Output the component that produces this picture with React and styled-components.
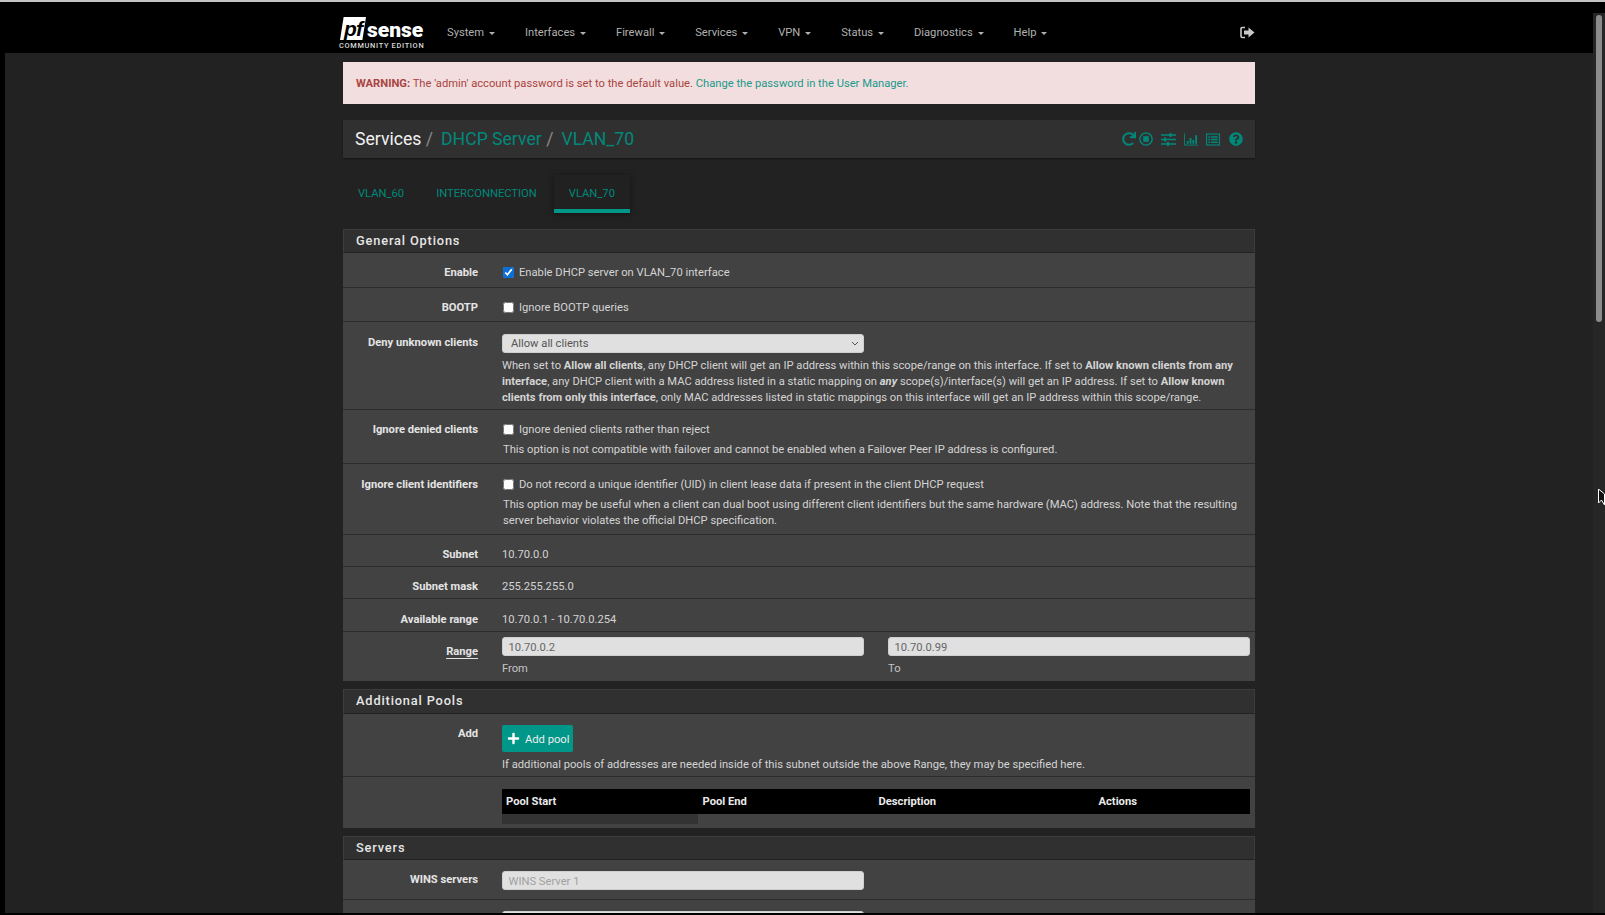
import React from 'react';
import styled, { createGlobalStyle } from 'styled-components';
import { FaRedo, FaQuestionCircle, FaPlus } from 'react-icons/fa';

const GlobalStyle = createGlobalStyle`
    html, body {
        margin: 0;
        height: 100%;
        overflow: hidden;
        background: #000;
    }
    * { box-sizing: border-box; }
`;

const Frame = styled.div`
    position: relative;
    height: 915px;
    display: flex;
    flex-direction: column;
    font-family: 'Roboto', 'Liberation Sans', sans-serif;
    font-size: 11.2px;
    line-height: 16px;
    color: #d4d4d4;
    border-top: 2px solid #c4c4c4;
    border-bottom: 2px solid #000;
    background: #000;
`;

const Shell = styled.div`
    flex: 1;
    min-height: 0;
    display: flex;
`;

const Page = styled.div`
    flex: 1;
    min-width: 0;
    display: flex;
    flex-direction: column;
    overflow: hidden;
`;

const Navbar = styled.nav`
    height: 51px;
    flex: none;
    background: #000;
    display: flex;
    align-items: center;
    padding: 9px 338px 0 339px;
`;

const Logo = styled.div`
    width: 93px;
    height: 34px;
    margin-top: 2px;
    flex: none;
    display: flex;
    flex-direction: column;
`;

const LogoTop = styled.div`
    display: flex;
    align-items: flex-end;
    height: 24px;
`;

const LogoBadge = styled.span`
    width: 26px;
    height: 23px;
    margin-left: 1px;
    background: #fff;
    color: #000;
    font-family: 'Liberation Sans', sans-serif;
    font-weight: 700;
    font-style: italic;
    font-size: 21px;
    line-height: 24px;
    letter-spacing: -1px;
    text-align: center;
    clip-path: polygon(14% 0, 100% 0, 86% 100%, 0 100%);
`;

const LogoWord = styled.span`
    font-family: 'Roboto', sans-serif;
    font-weight: 900;
    font-size: 21px;
    line-height: 20px;
    color: #fff;
    margin-left: 1px;
`;

const LogoEdition = styled.div`
    font-family: 'Roboto', sans-serif;
    font-weight: 500;
    font-size: 7.4px;
    line-height: 9px;
    letter-spacing: 0.68px;
    color: #d8d8d8;
    white-space: nowrap;
    margin-top: 1px;
`;

const NavItem = styled.span`
    display: flex;
    align-items: center;
    padding: 1px 15px 0;
    color: #b0b0b0;
    white-space: nowrap;
`;

const Caret = styled.i`
    display: inline-block;
    width: 0;
    height: 0;
    margin-left: 4.8px;
    margin-top: 1px;
    border-top: 3px solid currentColor;
    border-left: 3px solid transparent;
    border-right: 3px solid transparent;
`;

const NavRight = styled.div`
    margin-left: auto;
    display: flex;
    color: #c8c8c8;
`;

const Content = styled.main`
    flex: 1;
    min-height: 0;
    background: #222;
    margin-left: 5px;
    padding-left: 338px;
    overflow: hidden;
`;

const Column = styled.div`
    width: 912px;
`;

const Alert = styled.div`
    margin-top: 9px;
    height: 42px;
    padding: 14px 13px 0;
    background: #f2dede;
    color: #a94442;
`;

const AlertLink = styled.a`
    color: #1a9a8c;
    text-decoration: none;
`;

const Crumbs = styled.div`
    margin-top: 16px;
    height: 38px;
    padding: 0 12px;
    display: flex;
    align-items: center;
    background: #303030;
    box-shadow: 0 1px 2px rgba(0, 0, 0, 0.4);
`;

const CrumbTitle = styled.h1`
    margin: 0;
    display: flex;
    font-size: 17.6px;
    font-weight: 400;
    line-height: 24px;
    color: #f2f2f2;
`;

const CrumbLink = styled.a`
    color: #00897b;
    text-decoration: none;
`;

const CrumbSep = styled.span`
    color: #8a8a8a;
    margin: 0 8px 0 4.5px;
`;

const CrumbIcons = styled.div`
    margin-left: auto;
    display: flex;
    align-items: center;
    color: #00897b;
`;

const IconSlot = styled.span`
    display: flex;
    margin-left: ${(p) => p.$gap ?? 8}px;
`;

const Tabs = styled.div`
    margin-top: 17px;
    height: 38px;
    display: flex;
    gap: 2px;
`;

const Tab = styled.a`
    padding: 11px 15px 0;
    color: #00897b;
    background: ${(p) => (p.$active ? '#212121' : 'transparent')};
    border-bottom: 4px solid ${(p) => (p.$active ? '#009688' : 'transparent')};
    box-shadow: ${(p) => (p.$active ? '0 1px 6px rgba(0, 0, 0, 0.45)' : 'none')};
`;

const Panel = styled.section`
    margin-top: ${(p) => p.$top ?? 8}px;
    background: #424242;
`;

const PanelHeading = styled.h2`
    margin: 0;
    height: ${(p) => p.$height}px;
    padding: 0 12px ${(p) => p.$lift ?? 0}px;
    display: flex;
    align-items: center;
    background: #303030;
    border: 1px solid #3d3d3d;
    border-bottom-color: #222;
    font-size: 12.8px;
    font-weight: 500;
    letter-spacing: 0.84px;
    color: #e6e6e6;
`;

const Row = styled.div`
    height: ${(p) => p.$height}px;
    padding-top: ${(p) => p.$top ?? 11}px;
    display: flex;
    border-bottom: ${(p) => (p.$last ? 'none' : '1px solid #2c2c2c')};
`;

const Label = styled.div`
    width: 135px;
    flex: none;
    margin-top: ${(p) => p.$offset ?? 1}px;
    text-align: right;
    font-weight: 700;
    color: #e4e4e4;
`;

const LabelText = styled.span`
    border-bottom: ${(p) => (p.$under ? '1px solid #e4e4e4' : 'none')};
`;

const Value = styled.div`
    margin-left: 24px;
    flex: 1;
    min-width: 0;
    padding-right: 5px;
`;

const PlainValue = styled.div`
    padding-top: 1px;
`;

const CheckLine = styled.label`
    display: flex;
    align-items: center;
    padding-top: 1px;
`;

const Check = styled.input.attrs({ type: 'checkbox' })`
    width: 11px;
    height: 11px;
    margin: -1px 5.5px 0 0.5px;
    accent-color: #0b6fd6;
`;

const Help = styled.div`
    margin-top: ${(p) => p.$top ?? 4}px;
    padding-left: ${(p) => p.$indent ?? 0}px;
    padding-right: 8px;
`;

const Select = styled.select`
    display: block;
    width: 362px;
    height: 19px;
    padding: 0 0 0 8px;
    appearance: none;
    background-color: #e0e0e0;
    background-image: url("data:image/svg+xml,%3Csvg xmlns='http://www.w3.org/2000/svg' width='8' height='5'%3E%3Cpath d='M1 1l3 3 3-3' fill='none' stroke='%23555' stroke-width='1'/%3E%3C/svg%3E");
    background-repeat: no-repeat;
    background-position: right 4px center;
    border: 1px solid #cfcfcf;
    border-radius: 3px;
    font: inherit;
    color: #555;
`;

const Field = styled.input`
    display: block;
    width: 362px;
    height: 19px;
    padding: 1px 5.5px 0;
    background: #e0e0e0;
    border: 1px solid #cfcfcf;
    border-radius: 3px;
    font: inherit;
    color: #666;
    &::placeholder { color: #a0a0a0; opacity: 1; }
`;

const RangeGrid = styled.div`
    display: grid;
    grid-template-columns: 362px 362px;
    column-gap: 24px;
`;

const SubLabel = styled.div`
    margin-top: 5px;
    color: #c4c4c4;
`;

const AddButton = styled.button`
    display: flex;
    align-items: center;
    gap: 5px;
    width: 71px;
    height: 27px;
    padding: 0 0 0 5px;
    border: none;
    border-radius: 2px;
    background: #009688;
    color: #eee;
    font: inherit;
`;

const AddText = styled.span`
    padding-top: 2px;
`;

const TableHead = styled.div`
    display: grid;
    grid-template-columns: 196.5px 176px 220px 1fr;
    height: 25px;
    width: 748px;
    align-items: center;
    padding-left: 4px;
    background: #000;
    font-weight: 700;
    color: #eaeaea;
`;

const TableStub = styled.div`
    width: 196px;
    height: 10px;
    background: #333;
`;

const Track = styled.div`
    width: 12px;
    flex: none;
    margin-top: 11px;
    padding: 2px 3px 0;
    background: #262626;
`;

const Thumb = styled.div`
    height: 307px;
    border-radius: 3px;
    background: #8c8c8c;
`;

const Cursor = styled.svg`
    position: absolute;
    left: 1598px;
    top: 487px;
`;

const NAV = ['System', 'Interfaces', 'Firewall', 'Services', 'VPN', 'Status', 'Diagnostics', 'Help'];

function LogoutIcon() {
    return (
        <svg width="15" height="13" viewBox="0 0 15 13">
            <path d="M5 1.5H2.2A1.2 1.2 0 0 0 1 2.7v7.6a1.2 1.2 0 0 0 1.2 1.2H5" fill="none" stroke="currentColor" strokeWidth="1.6" />
            <path d="M4 4.5h4.5V1.5L14.5 6.5 8.5 11.5V8.5H4z" fill="currentColor" />
        </svg>
    );
}

function StopIcon() {
    return (
        <svg width="14" height="14" viewBox="0 0 15 15">
            <circle cx="7.5" cy="7.5" r="6.6" fill="none" stroke="currentColor" strokeWidth="1.5" />
            <rect x="4.5" y="4.5" width="6" height="6" fill="currentColor" />
        </svg>
    );
}

function SlidersIcon() {
    return (
        <svg width="15" height="13" viewBox="0 0 15 13">
            <path d="M0 2h15M0 6.5h15M0 11h15" stroke="currentColor" strokeWidth="1.6" />
            <rect x="8.5" y="0" width="2" height="4" fill="currentColor" />
            <rect x="3" y="4.5" width="2" height="4" fill="currentColor" />
            <rect x="6" y="9" width="2" height="4" fill="currentColor" />
        </svg>
    );
}

function ChartIcon() {
    return (
        <svg width="14" height="13" viewBox="0 0 15 13">
            <path d="M.5 0v12.5H15" fill="none" stroke="currentColor" />
            <path d="M3 8h2v3H3zM6 5h2v6H6zM9 7h2v4H9zM12 2h2v9h-2z" fill="currentColor" />
        </svg>
    );
}

function ListIcon() {
    return (
        <svg width="14" height="13" viewBox="0 0 15 13">
            <rect x=".6" y=".6" width="13.8" height="11.8" fill="none" stroke="currentColor" strokeWidth="1.2" />
            <path d="M2.5 3h2v1.6h-2zM2.5 5.8h2v1.6h-2zM2.5 8.6h2v1.6h-2zM5.5 3h7v1.6h-7zM5.5 5.8h7v1.6h-7zM5.5 8.6h7v1.6h-7z" fill="currentColor" />
        </svg>
    );
}

export default function App() {
    return (
        <Frame>
            <GlobalStyle />
            <Shell>
                <Page>
                    <Navbar>
                        <Logo>
                            <LogoTop>
                                <LogoBadge>pf</LogoBadge>
                                <LogoWord>sense</LogoWord>
                            </LogoTop>
                            <LogoEdition>COMMUNITY EDITION</LogoEdition>
                        </Logo>
                        {NAV.map((item) => (
                            <NavItem key={item}>
                                {item}
                                <Caret />
                            </NavItem>
                        ))}
                        <NavRight>
                            <LogoutIcon />
                        </NavRight>
                    </Navbar>
                    <Content>
                        <Column>
                            <Alert>
                                <b>WARNING:</b> The 'admin' account password is set to the default value.{' '}
                                <AlertLink href="#">Change the password in the User Manager.</AlertLink>
                            </Alert>
                            <Crumbs>
                                <CrumbTitle>
                                    Services<CrumbSep>/</CrumbSep>
                                    <CrumbLink href="#">DHCP Server</CrumbLink>
                                    <CrumbSep>/</CrumbSep>
                                    <CrumbLink href="#">VLAN_70</CrumbLink>
                                </CrumbTitle>
                                <CrumbIcons>
                                    <IconSlot><FaRedo size={14} /></IconSlot>
                                    <IconSlot $gap={3}><StopIcon /></IconSlot>
                                    <IconSlot><SlidersIcon /></IconSlot>
                                    <IconSlot><ChartIcon /></IconSlot>
                                    <IconSlot><ListIcon /></IconSlot>
                                    <IconSlot $gap={9}><FaQuestionCircle size={14} /></IconSlot>
                                </CrumbIcons>
                            </Crumbs>
                            <Tabs>
                                <Tab>VLAN_60</Tab>
                                <Tab>INTERCONNECTION</Tab>
                                <Tab $active>VLAN_70</Tab>
                            </Tabs>
                            <Panel $top={16}>
                                <PanelHeading $height={24}>General Options</PanelHeading>
                                <Row $height={35}>
                                    <Label>Enable</Label>
                                    <Value>
                                        <CheckLine><Check defaultChecked />Enable DHCP server on VLAN_70 interface</CheckLine>
                                    </Value>
                                </Row>
                                <Row $height={34}>
                                    <Label>BOOTP</Label>
                                    <Value>
                                        <CheckLine><Check />Ignore BOOTP queries</CheckLine>
                                    </Value>
                                </Row>
                                <Row $height={88} $top={12}>
                                    <Label>Deny unknown clients</Label>
                                    <Value>
                                        <Select defaultValue="all">
                                            <option value="all">Allow all clients</option>
                                            <option value="any">Allow known clients from any interface</option>
                                            <option value="this">Allow known clients from only this interface</option>
                                        </Select>
                                        <Help $top={5}>
                                            When set to <b>Allow all clients</b>, any DHCP client will get an IP address within this scope/range on this interface. If set to <b>Allow known clients from any interface</b>, any DHCP client with a MAC address listed in a static mapping on <b><i>any</i></b> scope(s)/interface(s) will get an IP address. If set to <b>Allow known clients from only this interface</b>, only MAC addresses listed in static mappings on this interface will get an IP address within this scope/range.
                                        </Help>
                                    </Value>
                                </Row>
                                <Row $height={54}>
                                    <Label>Ignore denied clients</Label>
                                    <Value>
                                        <CheckLine><Check />Ignore denied clients rather than reject</CheckLine>
                                        <Help $indent={1}>This option is not compatible with failover and cannot be enabled when a Failover Peer IP address is configured.</Help>
                                    </Value>
                                </Row>
                                <Row $height={71} $top={12}>
                                    <Label>Ignore client identifiers</Label>
                                    <Value>
                                        <CheckLine><Check />Do not record a unique identifier (UID) in client lease data if present in the client DHCP request</CheckLine>
                                        <Help $indent={1}>This option may be useful when a client can dual boot using different client identifiers but the same hardware (MAC) address. Note that the resulting server behavior violates the official DHCP specification.</Help>
                                    </Value>
                                </Row>
                                <Row $height={32}>
                                    <Label>Subnet</Label>
                                    <Value><PlainValue>10.70.0.0</PlainValue></Value>
                                </Row>
                                <Row $height={32}>
                                    <Label>Subnet mask</Label>
                                    <Value><PlainValue>255.255.255.0</PlainValue></Value>
                                </Row>
                                <Row $height={33} $top={12}>
                                    <Label>Available range</Label>
                                    <Value><PlainValue>10.70.0.1 - 10.70.0.254</PlainValue></Value>
                                </Row>
                                <Row $height={49} $top={5} $last>
                                    <Label $offset={7}><LabelText $under>Range</LabelText></Label>
                                    <Value>
                                        <RangeGrid>
                                            <div>
                                                <Field defaultValue="10.70.0.2" />
                                                <SubLabel>From</SubLabel>
                                            </div>
                                            <div>
                                                <Field defaultValue="10.70.0.99" />
                                                <SubLabel>To</SubLabel>
                                            </div>
                                        </RangeGrid>
                                    </Value>
                                </Row>
                            </Panel>
                            <Panel>
                                <PanelHeading $height={25} $lift={2}>Additional Pools</PanelHeading>
                                <Row $height={63}>
                                    <Label>Add</Label>
                                    <Value>
                                        <AddButton><FaPlus size={13} color="#fff" /><AddText>Add pool</AddText></AddButton>
                                        <Help $top={5}>If additional pools of addresses are needed inside of this subnet outside the above Range, they may be specified here.</Help>
                                    </Value>
                                </Row>
                                <Row $height={51} $top={12} $last>
                                    <Label />
                                    <Value>
                                        <TableHead>
                                            <span>Pool Start</span>
                                            <span>Pool End</span>
                                            <span>Description</span>
                                            <span>Actions</span>
                                        </TableHead>
                                        <TableStub />
                                    </Value>
                                </Row>
                            </Panel>
                            <Panel>
                                <PanelHeading $height={24}>Servers</PanelHeading>
                                <Row $height={40}>
                                    <Label>WINS servers</Label>
                                    <Value><Field placeholder="WINS Server 1" /></Value>
                                </Row>
                                <Row $height={40} $last>
                                    <Label />
                                    <Value><Field placeholder="WINS Server 2" /></Value>
                                </Row>
                            </Panel>
                        </Column>
                    </Content>
                </Page>
                <Track><Thumb /></Track>
            </Shell>
            <Cursor width="7" height="17" viewBox="0 0 7 17">
                <path d="M.5 0v14L3.5 11l3 5V5z" fill="#111" stroke="#fff" strokeWidth="1" />
            </Cursor>
        </Frame>
    );
}
